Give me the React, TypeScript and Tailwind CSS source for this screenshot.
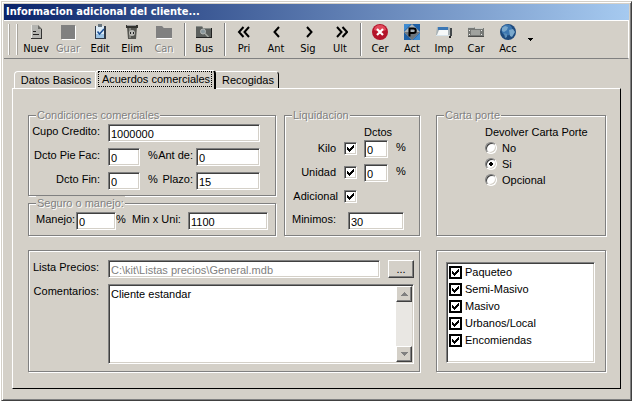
import type { ComponentProps, ReactNode } from "react";
import clsx from "clsx";

const sunken =
  "border border-t-[#808080] border-l-[#808080] border-r-white border-b-white shadow-[inset_1px_1px_0_#404040,inset_-1px_-1px_0_#d4d0c8]";
const raised =
  "border border-t-white border-l-white border-r-[#404040] border-b-[#404040] bg-[#d4d0c8] shadow-[inset_-1px_-1px_0_#808080]";
const etched =
  "min-w-0 border border-[#808080] shadow-[1px_1px_0_#fff,inset_1px_1px_0_#fff]";

function Field({ className, ...rest }: ComponentProps<"input">) {
  return (
    <input
      type="text"
      className={clsx(
        sunken,
        "h-[18px] min-w-0 bg-white pt-0.5 pl-0.5 leading-[14px] outline-none disabled:text-[#808080]",
        className,
      )}
      {...rest}
    />
  );
}

function Check({ id, flat }: { id: string; flat?: boolean }) {
  return (
    <span className="grid shrink-0 place-items-center">
      <input
        id={id}
        type="checkbox"
        defaultChecked
        className={clsx(
          "peer col-start-1 row-start-1 size-[13px] appearance-none bg-white",
          flat ? "border-2 border-black" : sunken,
        )}
      />
      <svg
        viewBox="0 0 7 7"
        shapeRendering="crispEdges"
        className="pointer-events-none col-start-1 row-start-1 hidden size-[7px] peer-checked:block"
      >
        <path
          d="M0 2h1v3h-1zM1 3h1v3h-1zM2 4h1v3h-1zM3 3h1v3h-1zM4 2h1v3h-1zM5 1h1v3h-1zM6 0h1v3h-1z"
          fill="#000"
        />
      </svg>
    </span>
  );
}

function Group({ title, className, children }: { title: string; className?: string; children: ReactNode }) {
  return (
    <fieldset className={clsx(etched, className)}>
      <legend className="ml-[7px] bg-[#d4d0c8] px-px leading-[14px] text-[#808080] [text-shadow:1px_1px_0_#fff]">
        {title}
      </legend>
      {children}
    </fieldset>
  );
}

function Icon({ children }: { children: ReactNode }) {
  return (
    <svg viewBox="0 0 16 16" className="size-4">
      {children}
    </svg>
  );
}

const icons = {
  nuevo: (
    <Icon>
      <path d="M3 1h7l4 4v10H3z" fill="#b4b4b0" />
      <path d="M3.500 1v14" stroke="#e8e8e4" />
      <path d="M10 1v4h4z" fill="#6c6c68" />
      <path d="M13.500 5v10M3 14.500h11" stroke="#333" fill="none" />
      <path d="M5 7.500h3M5 10.500h6" stroke="#222" />
    </Icon>
  ),
  guardar: (
    <Icon>
      <path d="M2 2h14v14H2z" fill="#fff" />
      <path d="M1 1h14v14H1z" fill="#808080" />
    </Icon>
  ),
  editar: (
    <Icon>
      <path d="M3 2h11v13H3z" fill="#303a48" />
      <path d="M4 2h8v12H4z" fill="#dcebf7" />
      <path d="M4 10h8v4H4z" fill="#9cc3e4" />
      <path d="M6 0h4v3H6z" fill="#68757f" />
      <path d="M5.500 7.500l2 2.500L12 5" fill="none" stroke="#1c4f94" strokeWidth="1.500" />
    </Icon>
  ),
  eliminar: (
    <Icon>
      <path d="M3 3h10l-1 12H4z" fill="#555550" />
      <path d="M5 4h2v10H5z" fill="#85857f" />
      <path d="M2 1h12v3H2z" fill="#33332f" />
      <path d="M3 1.500h9" stroke="#999" />
      <circle cx="8" cy="9" r="3" fill="#b9b9b4" />
      <path d="M6 8h1v2H6zM9 8h1v2H9z" fill="#222" />
    </Icon>
  ),
  cancelar: (
    <Icon>
      <path d="M1 3h6l2 2h8v10H1z" fill="#fff" />
      <path d="M0 2h6l2 2h8v10H0z" fill="#808080" />
    </Icon>
  ),
  buscar: (
    <Icon>
      <path d="M0 2h6l1 2h9v10H0z" fill="#5c605e" />
      <path d="M0 2.500h6M7 4.500h8" stroke="#8a8e8a" />
      <circle cx="7" cy="7.500" r="2.500" fill="#8a989e" stroke="#b4b8b6" />
      <path d="M9 9.500l3.500 3.500" stroke="#a4a8a4" strokeWidth="1.500" />
      <path d="M15.500 4v10M0 13.500h16" stroke="#222" />
    </Icon>
  ),
  primero: (
    <Icon>
      <path d="M7.500 3L3 8l4.500 5M13 3L8.500 8l4.500 5" fill="none" stroke="#000" strokeWidth="2" />
    </Icon>
  ),
  anterior: (
    <Icon>
      <path d="M11 3L6.500 8l4.500 5" fill="none" stroke="#000" strokeWidth="2" />
    </Icon>
  ),
  siguiente: (
    <Icon>
      <path d="M7 3l4.500 5L7 13" fill="none" stroke="#000" strokeWidth="2" />
    </Icon>
  ),
  ultimo: (
    <Icon>
      <path d="M5 3l4.500 5L5 13M10.500 3L15 8l-4.500 5" fill="none" stroke="#000" strokeWidth="2" />
    </Icon>
  ),
  cerrar: (
    <Icon>
      <circle cx="8" cy="8" r="8" fill="#b3142a" />
      <path d="M2 6a6 5 0 0 1 12 0q-6 3-12 0" fill="#e0495a" />
      <path d="M5 5l6 6M11 5l-6 6" stroke="#fff" strokeWidth="2.200" />
    </Icon>
  ),
  actualizar: (
    <Icon>
      <path d="M0 0h16v16H0z" fill="#1d5fa5" />
      <path d="M0 0h7L0 7zM16 16H9l7-7z" fill="#3f8bd0" />
      <path d="M8 0l8 8-8 8-8-8z" fill="#a9b3ba" />
      <path d="M0 8h16l-8 8z" fill="#6c757c" />
      <path d="M5.500 12.500v-8h4a2 2 0 0 1 0 4.500h-4" fill="none" stroke="#000" strokeWidth="2" />
    </Icon>
  ),
  imprimir: (
    <Icon>
      <path d="M1 3h12l3 2v6H0z" fill="#a9b2b6" />
      <path d="M2 3h10v3H2z" fill="#3c77b4" />
      <path d="M3 6h9v5H1z" fill="#f6f8f8" />
      <path d="M0 11.500h13" stroke="#d8e4ea" />
      <path d="M14 4h2v8h-2z" fill="#44494c" />
      <path d="M13 12h2v2h-2z" fill="#222" />
    </Icon>
  ),
  carpeta: (
    <Icon>
      <path d="M0 3h6l1 1h9v9H0z" fill="#777976" />
      <path d="M0 3.500h6M7 4.500h8" stroke="#c8cac6" />
      <path d="M3 6h9v5H3z" fill="#a0a29e" />
      <path d="M1 6h1v1H1zM1 10h1v1H1zM13 6h1v1h-1zM13 10h1v1h-1z" fill="#eee" />
      <path d="M0 12.500h16" stroke="#4c4c4a" />
    </Icon>
  ),
  acceso: (
    <Icon>
      <circle cx="8" cy="8" r="8" fill="#1e4a7d" />
      <circle cx="7" cy="6" r="5.500" fill="#3c76b0" />
      <path d="M2 4l3-2 3 1-1 3-3 2-2-1zM9 6l4-1 2 3-3 5-2-1z" fill="#7aa8cc" />
      <path d="M4 9l3 1v3l-2 1z" fill="#5a8cb8" />
    </Icon>
  ),
};

type Tool = { label: string; icon: ReactNode; disabled?: boolean };

const toolGroups: Tool[][] = [
  [
    { label: "Nuev", icon: icons.nuevo },
    { label: "Guar", icon: icons.guardar, disabled: true },
    { label: "Edit", icon: icons.editar },
    { label: "Elim", icon: icons.eliminar },
    { label: "Can", icon: icons.cancelar, disabled: true },
  ],
  [{ label: "Bus", icon: icons.buscar }],
  [
    { label: "Pri", icon: icons.primero },
    { label: "Ant", icon: icons.anterior },
    { label: "Sig", icon: icons.siguiente },
    { label: "Ult", icon: icons.ultimo },
  ],
  [
    { label: "Cer", icon: icons.cerrar },
    { label: "Act", icon: icons.actualizar },
    { label: "Imp", icon: icons.imprimir },
    { label: "Car", icon: icons.carpeta },
    { label: "Acc", icon: icons.acceso },
  ],
];

const tahoma = "font-['DejaVu_Sans_Condensed','DejaVu_Sans',sans-serif]";

function Toolbar() {
  return (
    <div
      role="toolbar"
      className={clsx(tahoma, "flex border-t border-r border-b border-t-white border-r-white border-b-[#808080] py-0.5 pl-1")}
    >
      <div className="mr-[3px] flex gap-[7px] py-px">
        <span className="w-px bg-white shadow-[1px_0_0_#a8a49c]" />
        <span className="w-px bg-white shadow-[1px_0_0_#a8a49c]" />
      </div>
      {toolGroups.map((group, i) => (
        <div key={i} className="flex">
          {i > 0 && <span className="mr-[2px] ml-1 w-0.5 border-r border-l border-r-white border-l-[#808080]" />}
          {group.map((tool) => (
            <button
              key={tool.label}
              type="button"
              disabled={tool.disabled}
              className="flex w-8 flex-col items-center gap-0.5 pt-px leading-[14px] disabled:text-[#808080] disabled:[text-shadow:1px_1px_0_#fff]"
            >
              {tool.icon}
              {tool.label}
            </button>
          ))}
        </div>
      ))}
      <button type="button" aria-label="Mas" className="flex items-center px-1">
        <svg viewBox="0 0 5 3" shapeRendering="crispEdges" className="h-[3px] w-[5px]">
          <path d="M0 0h5v1H0zM1 1h3v1H1zM2 2h1v1H2z" />
        </svg>
      </button>
    </div>
  );
}

function Tabs() {
  const inactive = "h-[17px] border-t border-white pb-px pl-0.5 leading-[14px]";
  return (
    <div role="tablist" className="flex items-end pl-0.5">
      <button role="tab" type="button" className={clsx(inactive, "w-[81px] rounded-tl-sm border-l")}>
        Datos Basicos
      </button>
      <button
        role="tab"
        type="button"
        aria-selected="true"
        className="z-10 -mb-px w-[121px] rounded-t-sm border-t border-r-2 border-l border-t-white border-r-black border-l-white bg-[#d4d0c8] px-0.5 pb-0.5"
      >
        <span className="block border border-dotted border-black pl-0.5 leading-[14px]">Acuerdos comerciales</span>
      </button>
      <button role="tab" type="button" className={clsx(inactive, "w-[63px] rounded-tr-sm border-r border-r-black")}>
        Recogidas
      </button>
    </div>
  );
}

function Condiciones() {
  return (
    <Group title="Condiciones comerciales" className="pb-[5px]">
      <div className="grid grid-cols-[79px_32px_56px_minmax(0,1fr)] gap-y-1.5 pt-0.5 pr-[15px] leading-[14px]">
        <label htmlFor="cupo" className="pr-2 text-right">Cupo Credito:</label>
        <Field id="cupo" defaultValue="1000000" className="col-span-3" />
        <label htmlFor="pie" className="pr-2 text-right">Dcto Pie Fac:</label>
        <Field id="pie" defaultValue="0" />
        <div className="flex justify-between pr-[3px] pl-2">
          <span>%</span>
          <label htmlFor="ant">Ant de:</label>
        </div>
        <Field id="ant" defaultValue="0" />
        <label htmlFor="fin" className="pr-2 text-right">Dcto Fin:</label>
        <Field id="fin" defaultValue="0" />
        <div className="flex justify-between pr-[3px] pl-2">
          <span>%</span>
          <label htmlFor="plazo">Plazo:</label>
        </div>
        <Field id="plazo" defaultValue="15" />
      </div>
    </Group>
  );
}

function Seguro() {
  return (
    <Group title="Seguro o manejo:" className="pb-[5px]">
      <div className="flex pt-0.5 pr-[7px] pl-[7px] leading-[14px]">
        <label htmlFor="manejo" className="w-10 shrink-0">Manejo:</label>
        <Field id="manejo" defaultValue="0" className="w-10 shrink-0" />
        <span className="w-4 shrink-0">%</span>
        <label htmlFor="minuni" className="w-14 shrink-0">Min x Uni:</label>
        <Field id="minuni" defaultValue="1100" className="flex-1" />
      </div>
    </Group>
  );
}

function CheckCell({ id }: { id: string }) {
  return (
    <div className="flex items-start pt-0.5">
      <Check id={id} />
    </div>
  );
}

function Liquidacion() {
  return (
    <Group title="Liquidacion">
      <div className="grid grid-cols-[59px_20px_24px_minmax(0,1fr)] gap-y-1.5 pt-0.5 leading-4">
        <span className="col-start-3 -mb-1.5">Dctos</span>
        <label htmlFor="kilo" className="col-start-1 pr-2 text-right">Kilo</label>
        <CheckCell id="kilo" />
        <Field aria-label="Dcto kilo" defaultValue="0" />
        <span className="pl-2 leading-[14px]">%</span>
        <label htmlFor="unidad" className="pr-2 text-right">Unidad</label>
        <CheckCell id="unidad" />
        <Field aria-label="Dcto unidad" defaultValue="0" />
        <span className="pl-2 leading-[14px]">%</span>
        <label htmlFor="adicional" className="h-[18px] pr-1.5 text-right">Adicional</label>
        <CheckCell id="adicional" />
      </div>
      <div className="flex pt-1.5 pr-[15px] pl-[7px] leading-[14px]">
        <label htmlFor="minimos" className="w-14 shrink-0">Minimos:</label>
        <Field id="minimos" defaultValue="30" className="flex-1" />
      </div>
    </Group>
  );
}

function CartaPorte() {
  return (
    <Group title="Carta porte">
      <div role="radiogroup" aria-labelledby="devolver" className="pt-0.5 pl-12 leading-4">
        <div id="devolver" className="whitespace-nowrap">Devolver Carta Porte</div>
        {["No", "Si", "Opcional"].map((option) => (
          <label key={option} className="flex items-center gap-[5px]">
            <input
              type="radio"
              name="devolver"
              defaultChecked={option === "Si"}
              className="size-3 appearance-none rounded-full border border-t-[#808080] border-r-white border-b-white border-l-[#808080] bg-white shadow-[inset_1px_1px_0_#404040,inset_-1px_-1px_0_#d4d0c8] checked:bg-[radial-gradient(circle,#000_2px,#fff_2px)]"
            />
            {option}
          </label>
        ))}
      </div>
    </Group>
  );
}

function ScrollButton({ down }: { down?: boolean }) {
  return (
    <button type="button" aria-label={down ? "Bajar" : "Subir"} className={clsx(raised, "grid size-4 place-items-center")}>
      <svg viewBox="0 0 7 4" shapeRendering="crispEdges" className={clsx("h-1 w-[7px]", down && "rotate-180")}>
        <path d="M3 0h1v1H3zM2 1h3v1H2zM1 2h5v1H1zM0 3h7v1H0z" fill="#808080" />
      </svg>
    </button>
  );
}

function Precios() {
  return (
    <div className={clsx(etched, "grid grid-cols-[79px_minmax(0,1fr)] gap-y-1.5 pt-[9px] pr-[5px] pb-[7px] leading-[14px]")}>
      <label htmlFor="lista" className="pr-[9px] text-right">Lista Precios:</label>
      <div className="flex gap-2">
        <Field id="lista" disabled defaultValue="C:\kit\Listas precios\General.mdb" className="flex-1" />
        <button type="button" className={clsx(raised, "h-[18px] w-[26px] leading-[14px]")}>...</button>
      </div>
      <label htmlFor="comentarios" className="pr-[9px] text-right">Comentarios:</label>
      <div className={clsx(sunken, "flex bg-white p-px")}>
        <textarea
          id="comentarios"
          rows={5}
          defaultValue="Cliente estandar"
          className="h-[76px] min-w-0 flex-1 resize-none overflow-hidden pt-px pl-px leading-[14px] outline-none"
        />
        <div className="flex flex-col justify-between bg-[#e9e7e3]">
          <ScrollButton />
          <ScrollButton down />
        </div>
      </div>
    </div>
  );
}

function Servicios() {
  return (
    <div className={clsx(etched, "flex pt-[11px] pr-[10px] pb-2 pl-[9px]")}>
      <div className={clsx(sunken, "flex-1 bg-white pt-px pl-0.5")}>
        {["Paqueteo", "Semi-Masivo", "Masivo", "Urbanos/Local", "Encomiendas"].map((name) => (
          <div key={name} className="flex h-[17px] items-center gap-[3px]">
            <Check id={name} flat />
            <label htmlFor={name}>{name}</label>
          </div>
        ))}
      </div>
    </div>
  );
}

export default function App() {
  return (
    <main className="bg-white pt-px pr-0.5 pl-px font-['Liberation_Sans',Arial,sans-serif] text-[11px] text-black">
      <div className="border border-t-[#d4d0c8] border-r-[#404040] border-b-[#404040] border-l-[#d4d0c8] bg-[#d4d0c8] px-0.5 pt-0.5 pb-[11px] shadow-[inset_1px_1px_0_#fff,inset_-1px_-1px_0_#808080]">
        <h1
          className={clsx(
            tahoma,
            "bg-linear-to-r/srgb from-[#0a246a] to-[#a6caf0] pl-0.5 leading-4 font-bold text-white",
          )}
        >
          Informacion adicional del cliente...
        </h1>
        <Toolbar />
        <div className="pt-[11px] pr-2 pl-2">
          <Tabs />
          <div
            role="tabpanel"
            className="grid grid-cols-[minmax(0,392fr)_minmax(0,170fr)] gap-x-4 gap-y-3.5 border border-t-white border-r-black border-b-black border-l-white pt-[19px] pr-3.5 pb-4 pl-[15px]"
          >
            <div className="grid grid-cols-[minmax(0,248fr)_minmax(0,136fr)] gap-x-2">
              <div className="flex min-w-0 flex-col">
                <Condiciones />
                <Seguro />
              </div>
              <Liquidacion />
            </div>
            <CartaPorte />
            <Precios />
            <Servicios />
          </div>
        </div>
      </div>
    </main>
  );
}
